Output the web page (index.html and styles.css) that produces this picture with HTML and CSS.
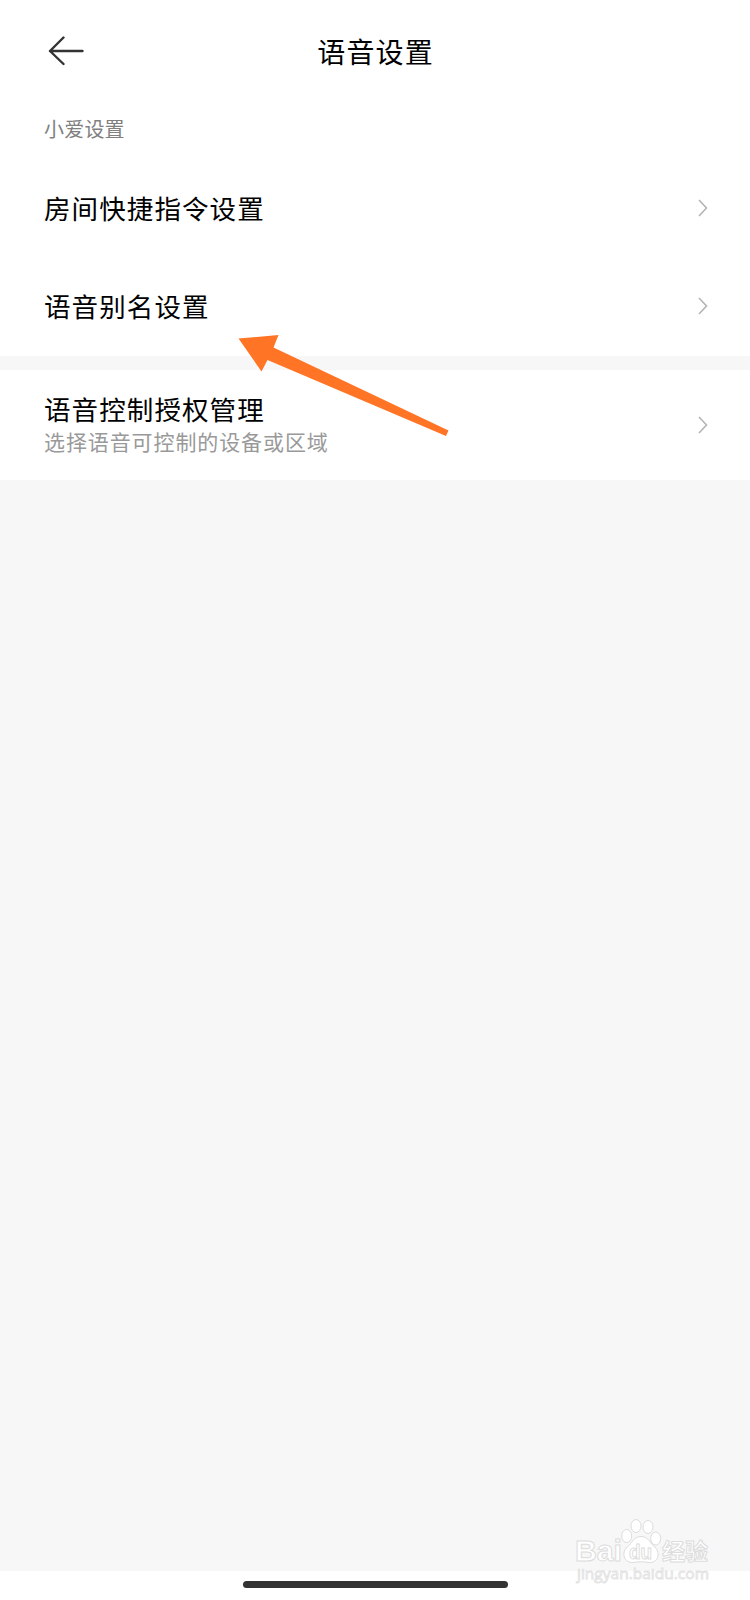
FILE: index.html
```html
<!DOCTYPE html>
<html lang="zh-CN">
<head>
<meta charset="utf-8">
<title>语音设置</title>
<link rel="stylesheet" href="styles.css">
</head>
<body>
<div class="screen">
  <header class="topbar">
    <svg class="back" width="36" height="30" viewBox="0 0 36 30"><path d="M15.500 1.500L2 15L15.500 28M2 15H34.500"/></svg>
    <h1 class="title">语音设置</h1>
  </header>
  <main class="content">
    <section class="group">
      <h2 class="group-title">小爱设置</h2>
      <div class="row">
        <span class="label">房间快捷指令设置</span>
        <svg class="chevron" width="10" height="18" viewBox="0 0 10 18"><path d="M1 1L8.500 9L1 17"/></svg>
      </div>
      <div class="row">
        <span class="label">语音别名设置</span>
        <svg class="chevron" width="10" height="18" viewBox="0 0 10 18"><path d="M1 1L8.500 9L1 17"/></svg>
      </div>
    </section>
    <section class="group auth">
      <div class="row row-tall">
        <div class="texts">
          <span class="label">语音控制授权管理</span>
          <span class="desc">选择语音可控制的设备或区域</span>
        </div>
        <svg class="chevron" width="10" height="18" viewBox="0 0 10 18"><path d="M1 1L8.500 9L1 17"/></svg>
      </div>
    </section>
  </main>
  <footer class="navbar"><div class="handle"></div></footer>
  <svg class="pointer" width="214" height="106" viewBox="0 0 214 106"><path d="M0.500 4.500L40.500 1L35.500 13.500L210.500 96.500L208 102L29.500 26L23.500 37.500Z"/></svg>
  <svg class="watermark" width="144" height="74" viewBox="0 0 144 74">
    <g class="mark">
      <text class="brand" x="3" y="47" textLength="47" lengthAdjust="spacingAndGlyphs">Bai</text>
      <ellipse cx="54.700" cy="22" rx="5" ry="6.500"/>
      <ellipse cx="64" cy="12" rx="5" ry="6.500"/>
      <ellipse cx="76" cy="13" rx="5" ry="6.500"/>
      <ellipse cx="83.700" cy="24.500" rx="5" ry="6.500"/>
      <path d="M69 22.500C61 22.500 60 30 55 33C49 39 52 49 61 48.500C67 47.500 72 47.500 77 48.500C86 49 89 40 83 33C78 30 77 22.500 69 22.500Z"/>
      <text class="du" x="57" y="44.500" textLength="23" lengthAdjust="spacingAndGlyphs">du</text>
      <text class="exp" x="90" y="45.500" textLength="46" lengthAdjust="spacingAndGlyphs">经验</text>
    </g>
    <text class="site" x="5" y="65" textLength="132" lengthAdjust="spacingAndGlyphs">jingyan.baidu.com</text>
  </svg>
</div>
</body>
</html>
```
FILE: styles.css
```css
* { box-sizing: border-box; }
body {
  margin: 0;
  font-family: "Noto Sans CJK SC", sans-serif;
  color: #000;
}
.screen {
  position: relative;
  display: flex;
  flex-direction: column;
  width: 750px;
  height: 1600px;
  overflow: hidden;
  background: #fff;
}
.topbar {
  display: grid;
  grid-template-columns: 48px 1fr 48px;
  align-items: center;
  height: 101px;
  padding: 0 48px;
}
.back { fill: none; stroke: #333; stroke-width: 2.4; stroke-linecap: round; stroke-linejoin: round; }
.title {
  margin: 0;
  font-size: 28px;
  font-weight: 400;
  line-height: 40px;
  letter-spacing: 1.2px;
  text-indent: 1.2px;
  text-align: center;
}
.content { flex: 1; background: #f7f7f7; }
.group { background: #fff; }
.group-title {
  margin: 0;
  padding: 13px 44px 0;
  height: 58px;
  font-size: 20px;
  font-weight: 400;
  line-height: 30px;
  letter-spacing: 0.2px;
  color: #808080;
}
.row {
  display: flex;
  align-items: center;
  justify-content: space-between;
  height: 98px;
  padding: 0 42px 0 44px;
}
.label { font-size: 26.500px; line-height: 36px; letter-spacing: 1.1px; }
.chevron { fill: none; stroke: #b4b4b4; stroke-width: 1.6; }
.group:not(.auth) { height: 255px; }
.auth { margin-top: 14px; }
.row-tall { height: 110px; }
.texts { display: flex; flex-direction: column; padding-bottom: 4px; }
.desc { font-size: 21px; line-height: 28px; letter-spacing: 0.9px; color: #999; }
.navbar { display: flex; justify-content: center; height: 29px; padding-top: 10px; }
.handle { width: 265px; height: 6.500px; border-radius: 4px; background: #333; }
.pointer { position: absolute; left: 238px; top: 334px; fill: #ff7425; }
.watermark { position: absolute; left: 572px; top: 1514px; }
.mark { fill: #fff; stroke: #dcdcdc; stroke-width: 1; }
.brand { font: bold 30px "Liberation Sans", sans-serif; }
.du { font: bold 21px "Liberation Sans", sans-serif; }
.exp { font: bold 23px "Noto Sans CJK SC", sans-serif; }
.site { font: 14px "Open Sans", sans-serif; fill: #fff; stroke: #e2e2e2; stroke-width: 0.8; }
```
